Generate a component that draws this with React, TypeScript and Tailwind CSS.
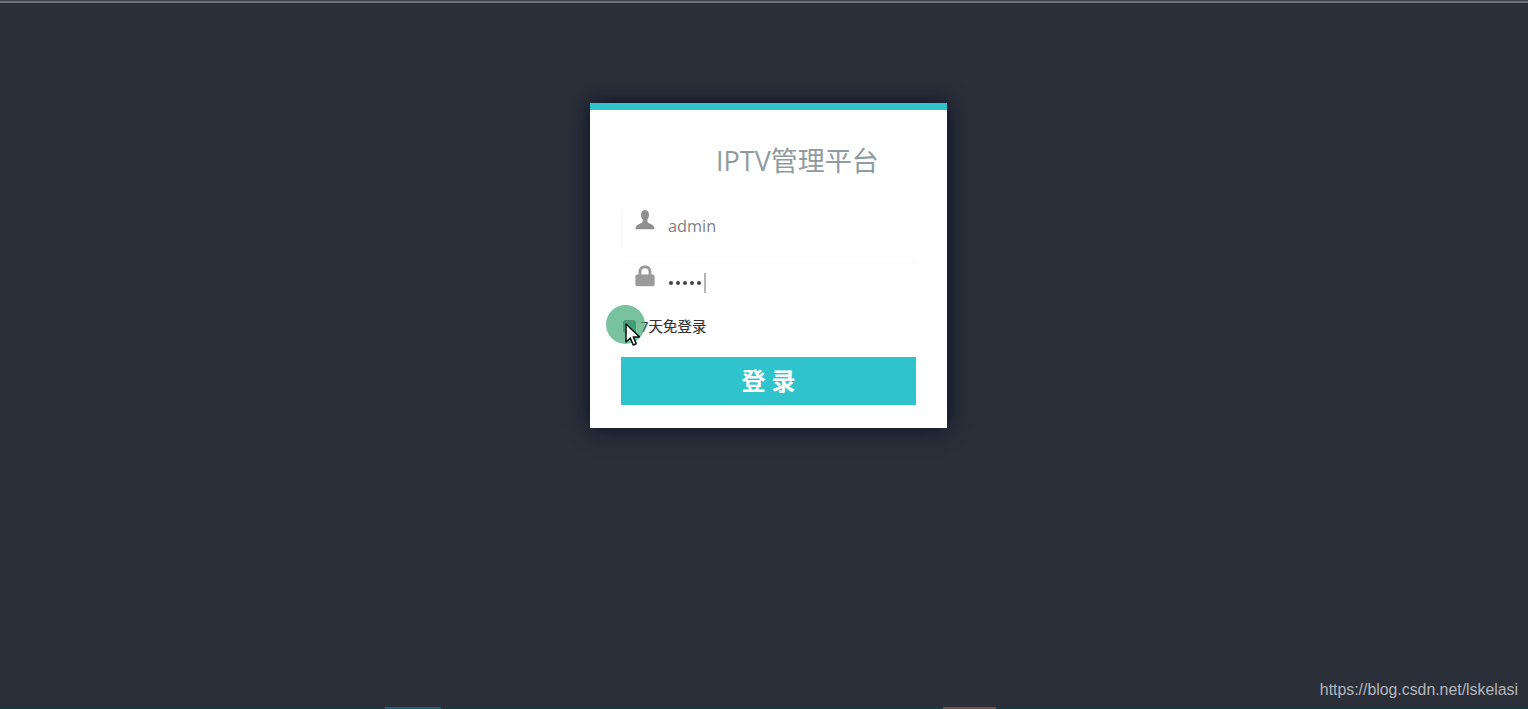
import React from "react"

const cjk = "font-['Open_Sans','Noto_Sans_CJK_SC',sans-serif]"

function UserIcon() {
  return (
    <svg width="20" height="20" viewBox="0 0 22 20" preserveAspectRatio="none" className="text-[#8f8f8f]" fill="currentColor">
      <path d="M11 0c-3 0-4.400 2.200-4.400 4.800 0 2 .7 3.600 1.800 4.800v1.600c0 1-.9 1.600-2.400 2.200C3.400 14.400 1 15.300.6 18c-.1.800.3 1.300 1 1.300h18.800c.7 0 1.100-.5 1-1.300-.4-2.700-2.800-3.600-5.400-4.600-1.500-.6-2.400-1.200-2.400-2.200V9.600c1.100-1.200 1.800-2.800 1.800-4.800C15.400 2.200 14 0 11 0z" />
    </svg>
  )
}

function LockIcon() {
  return (
    <svg width="20" height="22" viewBox="0 0 20 22" className="text-[#9a9a9a]" fill="currentColor">
      <path
        fillRule="evenodd"
        d="M10 .5C6 .5 3.500 3.200 3.500 7v2.500H2.200C1 9.500.4 10.200.4 11.300v8.200c0 1.100.6 1.800 1.800 1.800h15.600c1.200 0 1.800-.7 1.800-1.800v-8.200c0-1.100-.6-1.800-1.800-1.800h-1.300V7C16.500 3.200 14 .5 10 .5zm0 2.700c2.300 0 3.600 1.500 3.600 3.900v2.400H6.400V7.100C6.400 4.700 7.700 3.200 10 3.200z"
      />
    </svg>
  )
}

function Cursor() {
  return (
    <svg width="16" height="24" viewBox="0 0 16 24" className="absolute left-[624px] top-[323px]">
      <path d="M2 1v18l4.300-4 2.900 7 3-1.300-2.900-6.800H15.500z" fill="#fff" stroke="#111" strokeWidth="1.500" strokeLinejoin="round" />
    </svg>
  )
}

export default function App() {
  return (
    <div className="relative flex h-[709px] w-full flex-col overflow-hidden bg-[#2a2f3a]">
      <div className="h-[3px] border-t border-[#3a3d44] bg-[#6d7178]" />

      <main className="flex flex-1 justify-center pt-[100px]">
        <div className="ml-[9px] h-[325px] w-[357px] border-t-[7px] border-[#2fc4cb] bg-white shadow-[0_0_20px_rgba(6,14,30,0.95)]">
          <h1 className={`pl-[126px] pt-[32px] text-[27px] leading-[38px] font-normal text-[#8e9ba0] ${cjk}`}>IPTV管理平台</h1>

          <div className="px-[31px] pt-[30px]">
            <div className="flex h-[40px] items-start border-l border-[#f7f7f7] pl-[13px]">
              <UserIcon />
              <span className={`ml-[13px] pt-[4px] text-[16.300px] leading-[24px] text-[#7f7f7f] ${cjk}`}>admin</span>
            </div>

            <div className="mt-[12px] flex h-[44px] items-start border-t border-[#fafafa] pl-[14px] pt-[2px]">
              <LockIcon />
              <span className="ml-[14px] mt-[8px] flex items-center gap-[3px]">
                <i className="h-[4px] w-[4px] rounded-full bg-[#444]" />
                <i className="h-[4px] w-[4px] rounded-full bg-[#444]" />
                <i className="h-[4px] w-[4px] rounded-full bg-[#444]" />
                <i className="h-[4px] w-[4px] rounded-full bg-[#444]" />
                <i className="h-[4px] w-[4px] rounded-full bg-[#444]" />
                <i className="h-[20px] w-[2px] bg-[#b5b5b5]" />
              </span>
            </div>

            <div className="flex h-[40px] items-center border-t border-[#fcfcfc] pl-[2px]">
              <span className="h-[13px] w-[13px] rounded-[2px] border border-[#8a6f6f] bg-[#4c8c72]" />
              <span className={`ml-[4px] text-[14.500px] leading-[20px] text-[#333] [text-shadow:1px_0_0_rgba(60,60,60,0.35)] ${cjk}`}>7天免登录</span>
            </div>

            <button className={`mt-[11px] h-[48px] w-[295px] bg-[#2fc4cb] text-[24px] font-bold text-white ${cjk}`}>登 录</button>
          </div>
        </div>
      </main>

      <div className="flex h-[2px] bg-[#17393f]">
        <div className="ml-[385px] w-[56px] bg-[#13686c]" />
        <div className="ml-[502px] w-[53px] bg-[#6b5a3a]" />
      </div>

      {/* recording highlight + pointer */}
      <div className="absolute left-[606px] top-[305px] h-[39px] w-[39px] rounded-full bg-[#3fa878]/70" />
      <Cursor />

      <span className="absolute right-[10px] top-[680px] font-['Liberation_Sans',sans-serif] text-[15.850px] leading-[20px] text-[#b4b6ba]">https://blog.csdn.net/lskelasi</span>
    </div>
  )
}
